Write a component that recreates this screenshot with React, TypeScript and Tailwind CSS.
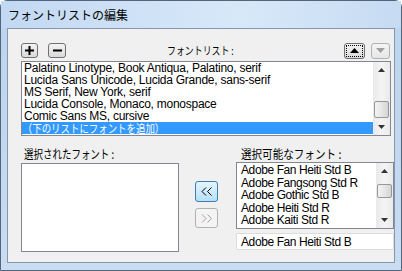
import React from "react";

const latin = { fontFamily: '"Liberation Sans", "Noto Sans CJK JP", sans-serif' };
const cjk = { fontFamily: '"Noto Sans CJK JP", "Liberation Sans", sans-serif' };

function UpArrow({ color = "#000" }: { color?: string }) {
  return (
    <svg width="7" height="4" viewBox="0 0 7 4">
      <path d="M3.5 0 L7 4 L0 4 Z" fill={color} />
    </svg>
  );
}
function DownArrow({ color = "#000" }: { color?: string }) {
  return (
    <svg width="7" height="4" viewBox="0 0 7 4">
      <path d="M0 0 L7 0 L3.5 4 Z" fill={color} />
    </svg>
  );
}

function Scrollbar({ thumbTop, thumbH }: { thumbTop: number; thumbH: number }) {
  return (
    <div className="relative w-[17px] h-full shrink-0 bg-gradient-to-r from-[#e9e9e9] via-[#f4f4f4] to-[#eaeaea] flex flex-col items-center justify-between py-[6px]">
      <UpArrow color="#333" />
      <DownArrow color="#333" />
      <div
        className="absolute left-[1px] w-[15px] rounded-[2px] border border-[#979797] bg-gradient-to-r from-[#f3f3f3] via-[#e6e6e6] to-[#d4d4d4]"
        style={{ top: thumbTop, height: thumbH }}
      />
    </div>
  );
}

export default function App() {
  const topItems = [
    "Palatino Linotype, Book Antiqua, Palatino, serif",
    "Lucida Sans Unicode, Lucida Grande, sans-serif",
    "MS Serif, New York, serif",
    "Lucida Console, Monaco, monospace",
    "Comic Sans MS, cursive",
  ];
  const rightItems = [
    "Adobe Fan Heiti Std B",
    "Adobe Fangsong Std R",
    "Adobe Gothic Std B",
    "Adobe Heiti Std R",
    "Adobe Kaiti Std R",
  ];
  return (
    <div className="w-[402px] h-[271px] bg-white overflow-hidden">
      <div className="w-[402px] h-[271px] rounded-t-[7px] border border-[#52657b] bg-gradient-to-b from-[#bcd4ee] to-[#c8dcf2] flex flex-col">
        <div className="h-[27px] px-[7px] flex items-center bg-gradient-to-r from-[#c2d9f3] via-[#d8e8f9] via-60% to-[#c6dbf2] text-[12px] text-black" style={cjk}>
          フォントリストの編集
        </div>
        <div className="mx-[6px] mb-[7px] flex-1 border border-[#8497ad] bg-[#f0f0f0] flex flex-col pl-[13px] pt-[14px]">
          {/* top row */}
          <div className="relative h-[15px] w-[370px] flex items-center">
            <div className="w-[17px] h-[15px] rounded-[3px] border border-[#707070] bg-gradient-to-b from-[#f4f4f4] to-[#d9d9d9] flex items-center justify-center">
              <svg width="9" height="9" viewBox="0 0 9 9">
                <path d="M3.5 0h2v3.5H9v2H5.5V9h-2V5.5H0v-2h3.5z" fill="#000" />
              </svg>
            </div>
            <div className="ml-[10px] w-[18px] h-[15px] rounded-[3px] border border-[#707070] bg-gradient-to-b from-[#f4f4f4] to-[#d9d9d9] flex items-center justify-center">
              <svg width="9" height="9" viewBox="0 0 9 9">
                <path d="M0 3.5h9v2H0z" fill="#000" />
              </svg>
            </div>
            <div className="absolute left-[146px] top-[-1px] text-[11px] scale-x-[0.81] origin-left whitespace-nowrap text-black" style={cjk}>
              フォントリスト :
            </div>
            <div className="ml-auto flex items-center gap-[6px] mr-[1px]">
              <div className="w-[21px] h-[16px] rounded-[3px] border border-[#707070] bg-gradient-to-b from-[#f4f4f4] to-[#d9d9d9] flex items-center justify-center">
                <div className="w-[17px] h-[12px] border border-dotted border-black flex items-center justify-center">
                  <svg width="9" height="5" viewBox="0 0 9 5"><path d="M4.5 0L9 5H0z" fill="#000" /></svg>
                </div>
              </div>
              <div className="w-[19px] h-[16px] rounded-[3px] border border-[#adb2b5] bg-gradient-to-b from-[#f4f4f4] to-[#e6e6e6] flex items-center justify-center">
                <svg width="9" height="5" viewBox="0 0 9 5"><path d="M0 0H9L4.5 5z" fill="#a0a0a0" /></svg>
              </div>
            </div>
          </div>
          {/* top list */}
          <div className="mt-[3px] w-[370px] h-[75px] border border-[#828790] bg-white flex">
            <div className="flex-1 min-w-0 flex flex-col">
              {topItems.map((t) => (
                <div key={t} className="h-[12px] leading-[12px] pl-[2px] text-[12px] tracking-[-0.25px] text-black whitespace-nowrap" style={latin}>
                  {t}
                </div>
              ))}
              <div className="h-[12px] bg-[#3399ff] flex items-center">
                <div className="pl-[1px] text-[11.5px] leading-[12px] text-white whitespace-nowrap scale-x-[0.82] origin-left" style={cjk}>
                  （下のリストにフォントを追加）
                </div>
              </div>
            </div>
            <Scrollbar thumbTop={39} thumbH={17} />
          </div>
          {/* labels */}
          <div className="mt-[10px] h-[16px] flex items-center text-[12px] text-black">
            <div className="w-[215px] shrink-0 pl-[3px]">
              <div className="whitespace-nowrap scale-x-[0.79] origin-left" style={cjk}>選択されたフォント :</div>
            </div>
            <div className="pl-[5px]">
              <div className="whitespace-nowrap scale-x-[0.88] origin-left" style={cjk}>選択可能なフォント :</div>
            </div>
          </div>
          {/* bottom */}
          <div className="flex items-start">
            <div className="mt-[1px] w-[158px] h-[89px] shrink-0 border border-[#828790] bg-white" />
            <div className="ml-[16px] mt-[19px] flex flex-col gap-[6px]">
              <div className="w-[23px] h-[21px] rounded-[3px] border border-[#3c7fb1] bg-gradient-to-b from-[#e5f4fc] to-[#b6e0f7] flex items-center justify-center">
                <svg width="12" height="9" viewBox="0 0 12 9">
                  <path d="M5 0.5L1 4.5L5 8.5M10.5 0.5L6.5 4.5L10.5 8.5" stroke="#000" strokeWidth="1" fill="none" />
                </svg>
              </div>
              <div className="w-[23px] h-[20px] rounded-[3px] border border-[#adb2b5] bg-[#f4f4f4] flex items-center justify-center">
                <svg width="12" height="9" viewBox="0 0 12 9">
                  <path d="M1 0.5L5 4.5L1 8.5M6.5 0.5L10.5 4.5L6.5 8.5" stroke="#a0a0a0" strokeWidth="1" fill="none" />
                </svg>
              </div>
            </div>
            <div className="ml-[18px] flex flex-col">
              <div className="w-[158px] h-[67px] border border-[#828790] bg-white flex">
                <div className="flex-1 min-w-0 flex flex-col pt-[1px] overflow-hidden">
                  {rightItems.map((t) => (
                    <div key={t} className="h-[12.6px] leading-[12.6px] pl-[4px] text-[12px] tracking-[-0.4px] text-black whitespace-nowrap" style={latin}>
                      {t}
                    </div>
                  ))}
                </div>
                <Scrollbar thumbTop={21} thumbH={14} />
              </div>
              <div className="mt-[4px] w-[158px] h-[17px] border border-[#dcdcdc] rounded-[1px] bg-white flex items-center pl-[4px] text-[12px] tracking-[-0.4px] text-black" style={latin}>
                Adobe Fan Heiti Std B
              </div>
            </div>
          </div>
        </div>
      </div>
    </div>
  );
}
